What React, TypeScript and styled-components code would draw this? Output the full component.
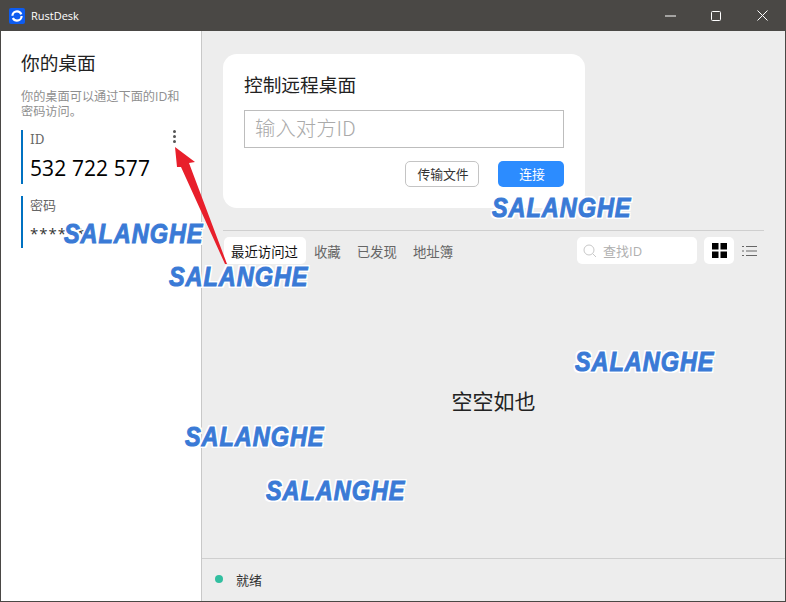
import React from "react";
import styled, { createGlobalStyle } from "styled-components";

const Global = createGlobalStyle`
  html, body { margin: 0; padding: 0; background: #4a4845; }
  body { font-family: "Open Sans", "Noto Sans CJK SC", sans-serif; overflow: hidden; }
  * { box-sizing: border-box; }
`;

const Frame = styled.div`
  position: relative;
  width: 786px;
  height: 602px;
  display: flex;
  flex-direction: column;
  background: #4a4845;
  padding: 0 1px 1px;
  overflow: hidden;
`;
const TitleBar = styled.header`
  height: 31px;
  margin: 0 -1px;
  flex: none;
  display: flex;
  align-items: center;
  padding: 0 1px 0 9px;
  color: #fff;
  font-size: 11px;
`;
const AppName = styled.span`
  margin-left: 6px;
`;
const WindowButtons = styled.div`
  margin-left: auto;
  display: flex;
  height: 100%;
`;
const WindowButton = styled.div`
  width: 46px;
  display: flex;
  align-items: center;
  justify-content: center;
`;
const Body = styled.div`
  flex: 1;
  display: flex;
  min-height: 0;
`;
const Sidebar = styled.aside`
  width: 201px;
  flex: none;
  background: #fff;
  border-right: 1px solid #c8c8c8;
  padding: 18px 0 0 20px;
`;
const SideTitle = styled.h1`
  margin: 0;
  font-size: 18.7px;
  line-height: 28px;
  font-weight: 400;
  color: #222;
`;
const SideHint = styled.p`
  margin: 12px 0 0;
  width: 170px;
  font-size: 12.2px;
  line-height: 15px;
  color: #8f8f8f;
`;
const IdBlock = styled.div`
  position: relative;
  margin-top: 11px;
  height: 54px;
  border-left: 2px solid #0071c1;
  padding: 1px 0 0 7px;
`;
const PasswordBlock = styled.div`
  margin-top: 12px;
  height: 52px;
  border-left: 2px solid #0071c1;
  padding-left: 7px;
`;
const InfoLabel = styled.div`
  font-size: 13px;
  line-height: 18px;
  color: #666;
  font-family: "Noto Sans CJK SC", sans-serif;
`;
const IdLabel = styled(InfoLabel)`
  font-family: "DejaVu Serif", serif;
  font-size: 12px;
`;
const IdValue = styled.div`
  margin-top: 5px;
  font-size: 21px;
  line-height: 28px;
  color: #000;
  letter-spacing: 0.1px;
`;
const Stars = styled.div`
  margin-top: 9px;
  font-size: 15px;
  line-height: 20px;
  letter-spacing: 1px;
  color: #333;
`;
const MoreDots = styled.div`
  position: absolute;
  right: 25px;
  top: 0;
  width: 3px;
  height: 13px;
  display: flex;
  flex-direction: column;
  justify-content: space-between;
`;
const Dot = styled.i`
  display: block;
  width: 3px;
  height: 3px;
  border-radius: 50%;
  background: #555;
`;
const Main = styled.main`
  flex: 1;
  min-width: 0;
  display: flex;
  flex-direction: column;
  background: #ededed;
`;
const Content = styled.div`
  flex: 1;
  display: flex;
  flex-direction: column;
  padding: 23px 21px 0;
  min-height: 0;
`;
const Card = styled.section`
  width: 362px;
  height: 154px;
  background: #fff;
  border-radius: 14px;
  padding: 17px 21px 0;
  display: flex;
  flex-direction: column;
`;
const CardTitle = styled.h2`
  margin: 0;
  font-size: 18.7px;
  line-height: 27px;
  font-weight: 400;
  color: #222;
`;
const IdInput = styled.div`
  margin-top: 12px;
  height: 38px;
  border: 1px solid #bdbdbd;
  padding: 0 0 5px 10px;
  display: flex;
  align-items: center;
  font-size: 20.4px;
  color: #aaa;
  font-family: "Noto Sans CJK SC", sans-serif;
  font-weight: 300;
`;
const Actions = styled.div`
  margin-top: 13px;
  display: flex;
  justify-content: flex-end;
  gap: 19px;
`;
const OutlineButton = styled.div`
  width: 74px;
  height: 26px;
  border: 1px solid #c4c4c4;
  border-radius: 5px;
  display: flex;
  align-items: center;
  justify-content: center;
  padding: 0 0 2px 2px;
  font-size: 12.8px;
  color: #333;
`;
const PrimaryButton = styled.div`
  width: 66px;
  height: 26px;
  border-radius: 5px;
  background: #2c8cff;
  display: flex;
  align-items: center;
  justify-content: center;
  padding: 0 0 2px 2px;
  font-size: 12.8px;
  color: #fff;
`;
const Divider = styled.hr`
  margin: 22px 0 0;
  width: 541px;
  border: 0;
  border-top: 1px solid #cfcfcf;
`;
const TabRow = styled.div`
  margin-top: 6px;
  margin-left: 1px;
  width: 540px;
  display: flex;
  align-items: center;
  height: 27px;
`;
const Tab = styled.div<{ $active?: boolean }>`
  height: 27px;
  padding: 0 8px;
  padding-left: ${(p) => (p.$active ? "7px" : "8px")};
  border-radius: 5px;
  background: ${(p) => (p.$active ? "#fff" : "transparent")};
  color: ${(p) => (p.$active ? "#111" : "#666")};
  font-size: 13.4px;
  display: flex;
  align-items: center;
  white-space: nowrap;
`;
const SearchBox = styled.div`
  margin-left: auto;
  width: 120px;
  height: 27px;
  background: #fff;
  border-radius: 5px;
  display: flex;
  align-items: center;
  padding-left: 6px;
  gap: 6px;
  font-size: 13px;
  color: #b0b0b0;
`;
const ViewToggle = styled.div<{ $active?: boolean }>`
  width: 30px;
  height: 27px;
  margin-left: ${(p) => (p.$active ? "7px" : "0")};
  border-radius: 5px;
  background: ${(p) => (p.$active ? "#fff" : "transparent")};
  display: flex;
  align-items: center;
  justify-content: center;
`;
const Empty = styled.div`
  flex: 1;
  display: flex;
  align-items: center;
  justify-content: center;
  padding-bottom: 22px;
  font-size: 21px;
  color: #222;
`;
const StatusBar = styled.footer`
  height: 43px;
  flex: none;
  border-top: 1px solid #cfcfcf;
  display: flex;
  align-items: center;
  padding: 0 0 2px 13px;
  font-size: 13px;
  color: #333;
`;
const StatusDot = styled.i`
  width: 8px;
  height: 8px;
  border-radius: 50%;
  background: #32bfa0;
  margin-right: 13px;
`;
const Watermark = styled.div<{ $x: number; $y: number }>`
  position: absolute;
  left: ${(p) => p.$x}px;
  top: ${(p) => p.$y}px;
  transform: scaleX(0.87);
  transform-origin: left center;
  font-family: "Liberation Sans", sans-serif;
  font-weight: 700;
  font-style: italic;
  font-size: 27px;
  line-height: 26px;
  letter-spacing: 1.1px;
  color: #3a7ad6;
  -webkit-text-stroke: 1px #3a7ad6;
  text-shadow: 2px 0 0 #fff, -2px 0 0 #fff, 0 2px 0 #fff, 0 -2px 0 #fff, 2px 2px 0 #fff, -2px -2px 0 #fff,
    2px -2px 0 #fff, -2px 2px 0 #fff;
  white-space: nowrap;
`;
const ArrowOverlay = styled.svg`
  position: absolute;
  left: 170px;
  top: 140px;
`;

const marks: [number, number][] = [
  [64, 221],
  [169, 264],
  [492, 195],
  [575, 349],
  [185, 424],
  [266, 478],
];

const SearchIcon = () => (
  <svg width="14" height="14" viewBox="0 0 14 14" fill="none" stroke="#c8c8c8" strokeWidth="1">
    <circle cx="6" cy="6" r="5" />
    <path d="M9.7 9.7 13 13" />
  </svg>
);

const GridIcon = () => (
  <svg width="15" height="15" viewBox="0 0 15 15" fill="#000">
    <rect width="6.5" height="6.5" />
    <rect x="8.5" width="6.5" height="6.5" />
    <rect y="8.5" width="6.5" height="6.5" />
    <rect x="8.5" y="8.5" width="6.5" height="6.5" />
  </svg>
);

const ListIcon = () => (
  <svg width="15" height="12" viewBox="0 0 15 12" fill="none" stroke="#666" strokeWidth="1">
    <path d="M0 1.5h2M4 1.5h11M0 6h2M4 6h11M0 10.5h2M4 10.5h11" />
  </svg>
);

const Logo = () => (
  <svg width="16" height="16" viewBox="0 0 16 16">
    <rect width="16" height="16" rx="2" fill="#0d5cf0" />
    <circle cx="8" cy="8" r="4.6" fill="none" stroke="#fff" strokeWidth="2.2" strokeDasharray="12 2.4" />
  </svg>
);

export default function App() {
  return (
    <Frame>
      <Global />
      <TitleBar>
        <Logo />
        <AppName>RustDesk</AppName>
        <WindowButtons>
          <WindowButton>
            <svg width="11" height="2" viewBox="0 0 11 2">
              <path d="M0 1h11" stroke="#fff" />
            </svg>
          </WindowButton>
          <WindowButton>
            <svg width="10" height="10" viewBox="0 0 10 10" fill="none">
              <rect x="0.5" y="0.5" width="9" height="9" rx="1" stroke="#fff" />
            </svg>
          </WindowButton>
          <WindowButton>
            <svg width="11" height="11" viewBox="0 0 11 11">
              <path d="M.5.5l10 10M10.5.5l-10 10" stroke="#fff" />
            </svg>
          </WindowButton>
        </WindowButtons>
      </TitleBar>
      <Body>
        <Sidebar>
          <SideTitle>你的桌面</SideTitle>
          <SideHint>你的桌面可以通过下面的ID和密码访问。</SideHint>
          <IdBlock>
            <IdLabel>ID</IdLabel>
            <IdValue>532 722 577</IdValue>
            <MoreDots>
              <Dot />
              <Dot />
              <Dot />
            </MoreDots>
          </IdBlock>
          <PasswordBlock>
            <InfoLabel>密码</InfoLabel>
            <Stars>******</Stars>
          </PasswordBlock>
        </Sidebar>
        <Main>
          <Content>
            <Card>
              <CardTitle>控制远程桌面</CardTitle>
              <IdInput>输入对方ID</IdInput>
              <Actions>
                <OutlineButton>传输文件</OutlineButton>
                <PrimaryButton>连接</PrimaryButton>
              </Actions>
            </Card>
            <Divider />
            <TabRow>
              <Tab $active>最近访问过</Tab>
              <Tab>收藏</Tab>
              <Tab>已发现</Tab>
              <Tab>地址簿</Tab>
              <SearchBox>
                <SearchIcon />
                查找ID
              </SearchBox>
              <ViewToggle $active>
                <GridIcon />
              </ViewToggle>
              <ViewToggle>
                <ListIcon />
              </ViewToggle>
            </TabRow>
            <Empty>空空如也</Empty>
          </Content>
          <StatusBar>
            <StatusDot />
            就绪
          </StatusBar>
        </Main>
      </Body>
      <ArrowOverlay width="62" height="130" viewBox="0 0 62 130">
        <path d="M5 7 25 22l-6 1 38 101h-2L11 27H7z" fill="#e81f2b" />
      </ArrowOverlay>
      {marks.map(([x, y]) => (
        <Watermark key={`${x}-${y}`} $x={x} $y={y}>
          SALANGHE
        </Watermark>
      ))}
    </Frame>
  );
}
